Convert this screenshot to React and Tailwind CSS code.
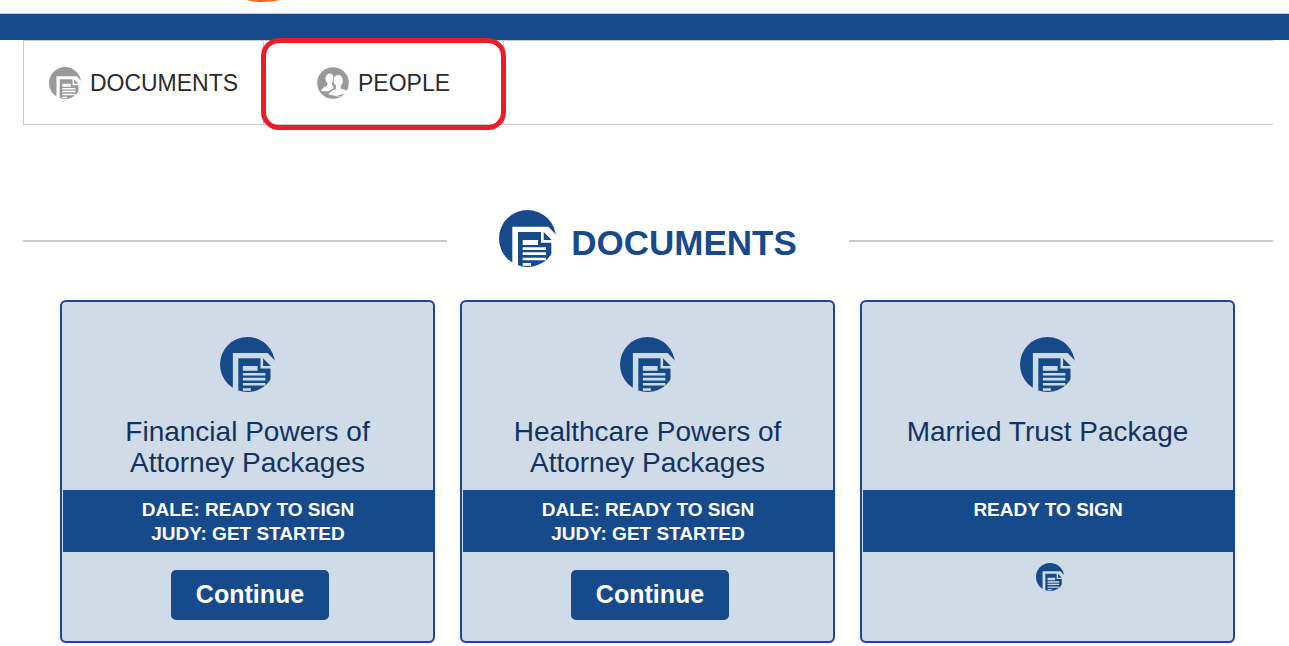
import React, { useId } from "react";

const packages = [
  {
    id: "financial",
    title: "Financial Powers of Attorney Packages",
    statuses: ["DALE: READY TO SIGN", "JUDY: GET STARTED"],
    action: "Continue",
  },
  {
    id: "healthcare",
    title: "Healthcare Powers of Attorney Packages",
    statuses: ["DALE: READY TO SIGN", "JUDY: GET STARTED"],
    action: "Continue",
  },
  {
    id: "trust",
    title: "Married Trust Package",
    statuses: ["READY TO SIGN"],
  },
];

// Disc with a document sheet cut out of it
const DocumentIcon = ({ className }) => {
  const maskId = useId();
  return (
    <svg viewBox="0 0 171 171" className={className} fill="currentColor" aria-hidden="true">
      <mask id={maskId} maskUnits="userSpaceOnUse" x="0" y="0" width="171" height="171">
        <rect width="171" height="171" fill="white" />
        <path d="M40 50H148L180 83V171H40Z" fill="black" />
        <path d="M57 66H126V98H157V171H57Z" fill="white" />
        <path d="M134 66L158 90H134Z" fill="white" />
        <path d="M71 90H117V105H71ZM71 112H141V120H71ZM71 127H141V135H71ZM71 143H141V151H71ZM71 159H96V167H71Z" fill="black" />
      </mask>
      <circle cx="85.5" cy="85.5" r="85.5" mask={`url(#${maskId})`} />
    </svg>
  );
};

// Disc with two people cut out of it
const PeopleIcon = ({ className }) => {
  const maskId = useId();
  return (
    <svg viewBox="0 0 98 98" className={className} fill="currentColor" aria-hidden="true">
      <mask id={maskId} maskUnits="userSpaceOnUse" x="0" y="0" width="98" height="98">
        <rect width="98" height="98" fill="white" />
        <ellipse cx="39" cy="35" rx="13" ry="15" fill="black" />
        <path d="M32 46H46V55C50 60 52 62 50 66C44 69 38 73 34 74H12C15 65 22 61 32 57Z" fill="black" />
        <ellipse cx="65" cy="43" rx="17" ry="22" fill="white" />
        <ellipse cx="65" cy="42" rx="14" ry="18" fill="black" />
        <path d="M58 56H73V67C84 68 92 71 98 77C90 82 76 83 62 87L75 91C60 90 48 86 35 84C38 76 48 71 58 68Z" fill="black" />
      </mask>
      <circle cx="49" cy="49" r="48.5" mask={`url(#${maskId})`} />
    </svg>
  );
};

const NavTab = ({ label, icon: Icon, highlighted }) => (
  <a
    href="#"
    className="relative flex w-60 items-center justify-center gap-[9px] border-r border-[#c8c8c8] text-[23px] text-[#2b2b2b]"
  >
    <Icon className="size-8 text-[#999999]" />
    <span className="pt-px">{label}</span>
    {highlighted && (
      <span className="pointer-events-none absolute -inset-x-[3px] -top-[3px] -bottom-[6px] rounded-[18px] border-5 border-[#ed1c24]" />
    )}
  </a>
);

const PackageCard = ({ title, statuses, action }) => (
  <article className="flex flex-col items-center rounded-md border-2 border-[#164a8b] bg-[#cfdbe7] pt-[35px] pb-[21px] text-center shadow-sm">
    <DocumentIcon className="size-[55px] text-[#164a8b]" />
    <h2 className="mt-6 min-h-[62px] px-10 text-[28px] leading-[31px] text-[#12335f]">{title}</h2>
    <div className="mt-3 min-h-[62px] w-full border-l border-[#cfdbe7] bg-[#164a8b] bg-clip-padding pt-2 pb-[6px] text-[19px] leading-6 font-bold text-white">
      {statuses.map((status) => (
        <p key={status}>{status}</p>
      ))}
    </div>
    {action ? (
      <button
        type="button"
        className="mt-[18px] ml-[5px] h-[50px] rounded-[5px] bg-[#164a8b] px-[25px] text-[25px] font-bold text-white"
      >
        {action}
      </button>
    ) : (
      <DocumentIcon className="mt-[11px] ml-[5px] size-7 text-[#164a8b]" />
    )}
  </article>
);

const App = () => (
  <div className="bg-white font-['Liberation_Sans',Arial,sans-serif]">
    <header>
      <div className="h-[14px] border-b border-[#c8c8c8] pl-[244px]">
        {/* bottom edge of the logo */}
        <svg width="38" height="3" viewBox="0 0 38 3" className="block" aria-hidden="true">
          <ellipse cx="19" cy="-8" rx="27" ry="10" fill="#f26a21" />
        </svg>
      </div>
      <div className="h-[26px] bg-[#164a8b]" />
    </header>

    <main className="mr-4 ml-[23px]">
      <nav className="flex h-[85px] border-y border-l border-[#c8c8c8]">
        <NavTab label="DOCUMENTS" icon={DocumentIcon} />
        <NavTab label="PEOPLE" icon={PeopleIcon} highlighted />
      </nav>

      <div className="mt-[85px] flex items-center">
        <div className="mt-1 h-0.5 flex-1 bg-[#cccccc]" />
        <h1 className="flex items-center gap-[15px] px-[52px] text-[35px] leading-10 font-bold text-[#164a8b]">
          <DocumentIcon className="size-[57px]" />
          <span className="pt-2">DOCUMENTS</span>
        </h1>
        <div className="mt-1 h-0.5 flex-1 bg-[#cccccc]" />
      </div>

      <section className="mt-[33px] grid grid-cols-3 gap-[25px] pr-[38px] pl-[37px]">
        {packages.map((item) => (
          <PackageCard key={item.id} {...item} />
        ))}
      </section>
    </main>
  </div>
);

export default App;
